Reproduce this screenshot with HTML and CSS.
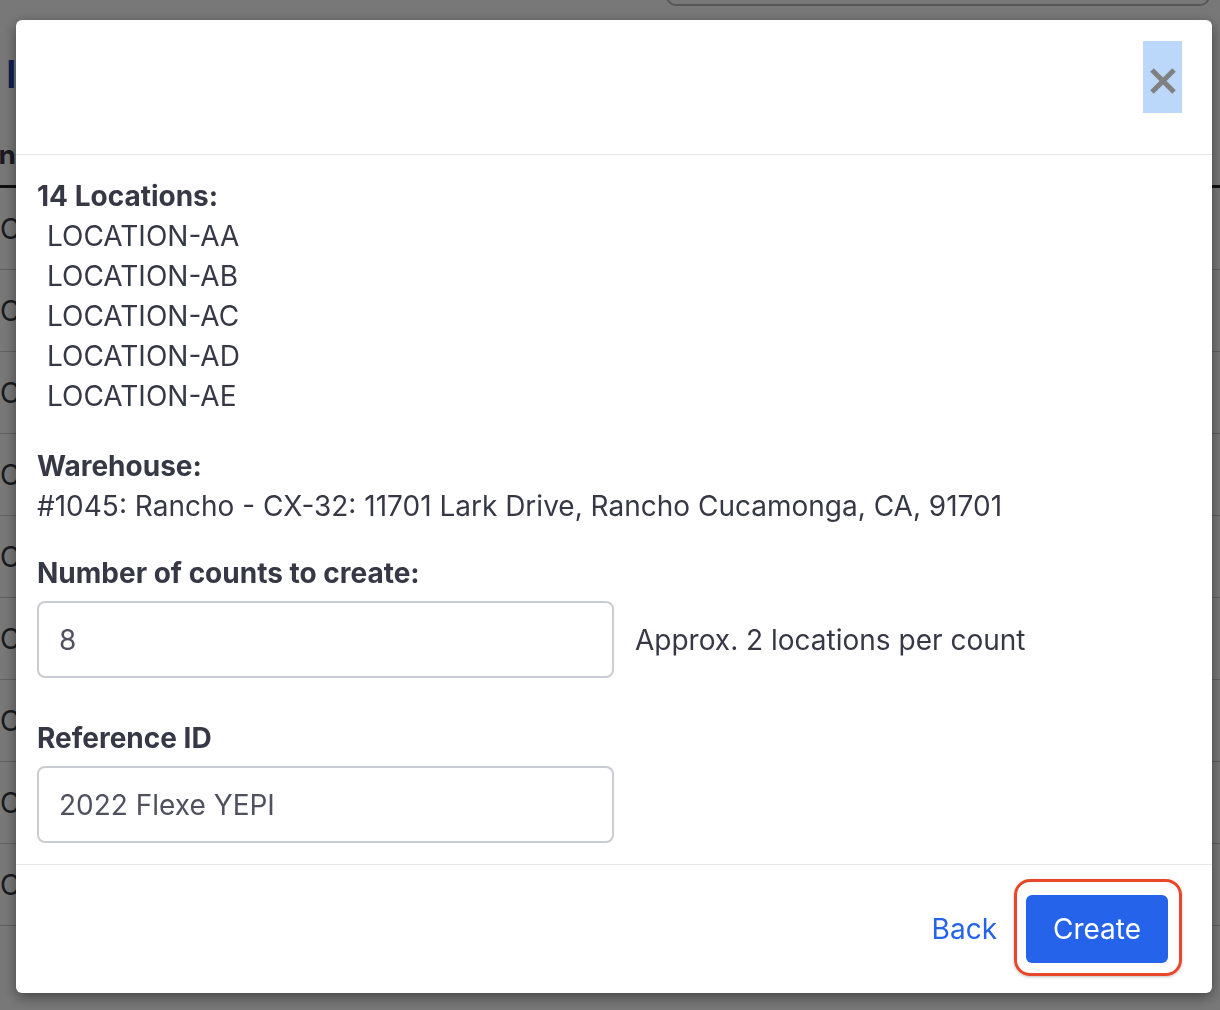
FILE: index.html
```html
<!DOCTYPE html>
<html lang="en">
<head>
    <meta charset="UTF-8">
    <meta name="viewport" content="width=device-width, initial-scale=1.0">
    <title>Create Counts</title>
    <link rel="stylesheet" href="styles.css">
</head>
<body>
    <div class="page">
        <div class="page-top">
            <h2 class="page-title"><span class="clip">I</span></h2>
            <div class="search-box"></div>
        </div>
        <table class="counts-table">
            <thead>
                <tr><th><span class="clip clip-end">Location</span></th></tr>
            </thead>
            <tbody>
                <tr><td><span class="clip">C</span></td></tr>
                <tr><td><span class="clip">C</span></td></tr>
                <tr><td><span class="clip">C</span></td></tr>
                <tr><td><span class="clip">C</span></td></tr>
                <tr><td><span class="clip">C</span></td></tr>
                <tr><td><span class="clip">C</span></td></tr>
                <tr><td><span class="clip">C</span></td></tr>
                <tr><td><span class="clip">C</span></td></tr>
                <tr><td><span class="clip">C</span></td></tr>
            </tbody>
        </table>
    </div>

    <div class="overlay">
        <div class="modal">
            <div class="modal-header">
                <button class="close-btn" aria-label="Close">
                    <svg width="28" height="28" viewBox="0 0 28 28">
                        <path d="M3 3 L25 25 M25 3 L3 25" stroke="#808080" stroke-width="5" fill="none"/>
                    </svg>
                </button>
            </div>

            <div class="modal-body">
                <div class="field-label">14 Locations:</div>
                <ul class="location-list">
                    <li>LOCATION-AA</li>
                    <li>LOCATION-AB</li>
                    <li>LOCATION-AC</li>
                    <li>LOCATION-AD</li>
                    <li>LOCATION-AE</li>
                </ul>

                <div class="field-label warehouse-label">Warehouse:</div>
                <div class="field-text">#1045: Rancho - CX-32: 11701 Lark Drive, Rancho Cucamonga, CA, 91701</div>

                <label class="field-label counts-label" for="counts">Number of counts to create:</label>
                <div class="input-row">
                    <input class="text-input" type="text" id="counts" value="8">
                    <span class="hint">Approx. 2 locations per count</span>
                </div>

                <label class="field-label ref-label" for="ref">Reference ID</label>
                <input class="text-input" type="text" id="ref" value="2022 Flexe YEPI">
            </div>

            <div class="modal-footer">
                <a href="#" class="back-link">Back</a>
                <span class="highlight">
                    <button class="create-btn">Create</button>
                </span>
            </div>
        </div>
    </div>
</body>
</html>
```

FILE: styles.css
```css
body {
    margin: 0;
    padding: 0;
    font-family: Inter, "Noto Sans", sans-serif;
    color: #363846;
    background: #fff;
    overflow: hidden;
    height: 1010px;
}
.page {
    width: 1220px;
}
.clip {
    display: block;
    width: 16px;
    overflow: hidden;
    white-space: nowrap;
}
.clip-end {
    direction: rtl;
}
.page-top {
    display: flex;
    justify-content: space-between;
    height: 148px;
}
.page-title {
    margin: 54px 0 0 6px;
    font-size: 38px;
    line-height: 40px;
    color: #1e40af;
    font-weight: 600;
}
.search-box {
    width: 540px;
    height: 40px;
    margin: -38px 10px 0 0;
    border: 2px solid #b8b8b8;
    border-radius: 10px;
}
.counts-table {
    width: 100%;
    border-collapse: collapse;
}
.counts-table th {
    text-align: left;
    font-size: 28px;
    line-height: 16px;
    font-weight: 700;
    height: 37px;
    padding: 0;
    border-bottom: 3px solid #222;
    vertical-align: top;
}
.counts-table td {
    font-size: 28px;
    font-weight: 400;
    height: 81px;
    padding: 0;
    border-bottom: 1px solid #ccc;
}
.overlay {
    position: fixed;
    top: 0;
    left: 0;
    right: 0;
    bottom: 0;
    background: rgba(0, 0, 0, 0.53);
}
.modal {
    margin: 20px 8px 0 16px;
    height: 973px;
    background: #fff;
    border-radius: 6px;
    box-shadow: 0 4px 14px rgba(0, 0, 0, 0.45);
    display: flex;
    flex-direction: column;
}
.modal-header {
    height: 135px;
    box-sizing: border-box;
    padding: 21px 30px 0 0;
    display: flex;
    justify-content: flex-end;
    align-items: flex-start;
    border-bottom: 1px solid #e5e5e5;
}
.close-btn {
    width: 39px;
    height: 72px;
    padding: 8px 0 0 0;
    border: 0;
    background: #bbd7fa;
    display: flex;
    align-items: center;
    justify-content: center;
}
.modal-body {
    padding: 21px 21px 21px 21px;
    font-size: 28px;
    line-height: 40px;
    border-bottom: 1px solid #e5e5e5;
}
.field-label {
    display: block;
    font-weight: 700;
}
.location-list {
    list-style: none;
    margin: 0;
    padding: 0 0 0 10px;
}
.warehouse-label {
    margin-top: 30px;
}
.counts-label {
    margin-top: 27px;
    margin-bottom: 8px;
}
.ref-label {
    margin-top: 40px;
    margin-bottom: 8px;
}
.input-row {
    display: flex;
    align-items: center;
    gap: 21px;
}
.text-input {
    display: block;
    width: 577px;
    height: 77px;
    box-sizing: border-box;
    border: 2px solid #c9ccd2;
    border-radius: 8px;
    padding: 0 20px;
    font-family: Inter, "Noto Sans", sans-serif;
    font-size: 28px;
    color: #4f525e;
    background: #fff;
}
.hint {
    color: #363846;
}
.modal-footer {
    flex: 1;
    display: flex;
    align-items: center;
    justify-content: flex-end;
    gap: 29px;
    padding: 0 44px 0 0;
}
.back-link {
    color: #2563eb;
    font-size: 28px;
    text-decoration: none;
}
.highlight {
    position: relative;
    display: inline-flex;
}
.highlight::before {
    content: "";
    position: absolute;
    top: -16px;
    left: -12px;
    right: -14px;
    bottom: -13px;
    border: 3px solid #e8472a;
    border-radius: 16px;
    box-shadow: 0 1px 3px rgba(0, 0, 0, 0.25);
}
.create-btn {
    width: 142px;
    height: 68px;
    border: 0;
    border-radius: 6px;
    background: #2563eb;
    color: #fff;
    font-family: Inter, "Noto Sans", sans-serif;
    font-size: 28px;
}
```
